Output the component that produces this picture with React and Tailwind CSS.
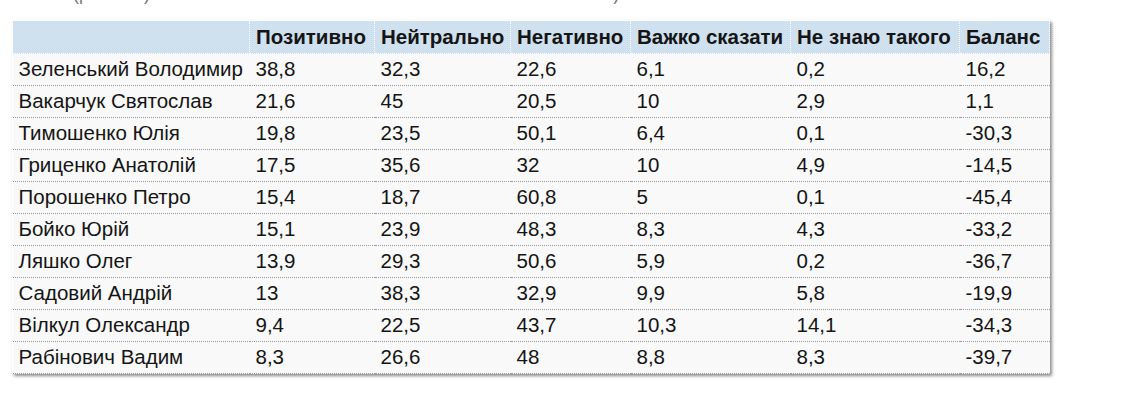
import React from "react";

const headers = ["", "Позитивно", "Нейтрально", "Негативно", "Важко сказати", "Не знаю такого", "Баланс"];
const widths = ["w-[237px]", "w-[125px]", "w-[136px]", "w-[120px]", "w-[160px]", "w-[169px]", "w-[90px]"];
const rows = [
  ["Зеленський Володимир", "38,8", "32,3", "22,6", "6,1", "0,2", "16,2"],
  ["Вакарчук Святослав", "21,6", "45", "20,5", "10", "2,9", "1,1"],
  ["Тимошенко Юлія", "19,8", "23,5", "50,1", "6,4", "0,1", "-30,3"],
  ["Гриценко Анатолій", "17,5", "35,6", "32", "10", "4,9", "-14,5"],
  ["Порошенко Петро", "15,4", "18,7", "60,8", "5", "0,1", "-45,4"],
  ["Бойко Юрій", "15,1", "23,9", "48,3", "8,3", "4,3", "-33,2"],
  ["Ляшко Олег", "13,9", "29,3", "50,6", "5,9", "0,2", "-36,7"],
  ["Садовий Андрій", "13", "38,3", "32,9", "9,9", "5,8", "-19,9"],
  ["Вілкул Олександр", "9,4", "22,5", "43,7", "10,3", "14,1", "-34,3"],
  ["Рабінович Вадим", "8,3", "26,6", "48", "8,8", "8,3", "-39,7"],
];

export default function App() {
  return (
    <div className="w-[1124px] h-[400px] bg-white overflow-hidden" style={{ fontFamily: '"Liberation Sans", Arial, sans-serif' }}>
      <div className="h-[7px] overflow-hidden text-[18px] leading-[22px] text-[#777]">
        <div className="-mt-[17px] flex">
          <span className="ml-[73px]">(рейтинг)</span>
          <span className="ml-[300px]">за всіма опитаними)</span>
        </div>
      </div>
      <div className="pt-[13px] pl-[12px]">
        <table className="border-collapse table-fixed w-[1037px] shadow-[2px_2px_3px_rgba(0,0,0,0.45)] text-[20.5px] text-[#151515]">
          <thead>
            <tr className="bg-[#cfe0ef] h-[33px]">
              {headers.map((h, i) => (
                <th key={i} className={`${widths[i]} border border-dotted border-white text-left font-bold px-[6px] py-0 whitespace-nowrap`}>
                  {h}
                </th>
              ))}
            </tr>
          </thead>
          <tbody>
            {rows.map((r, ri) => (
              <tr key={ri} className="bg-[#f9f9f9] h-[32px]">
                {r.map((c, ci) => (
                  <td key={ci} className="border-b border-dotted border-b-[#9a9a9a] px-[6px] py-0 whitespace-nowrap">
                    {c}
                  </td>
                ))}
              </tr>
            ))}
          </tbody>
        </table>
      </div>
    </div>
  );
}
